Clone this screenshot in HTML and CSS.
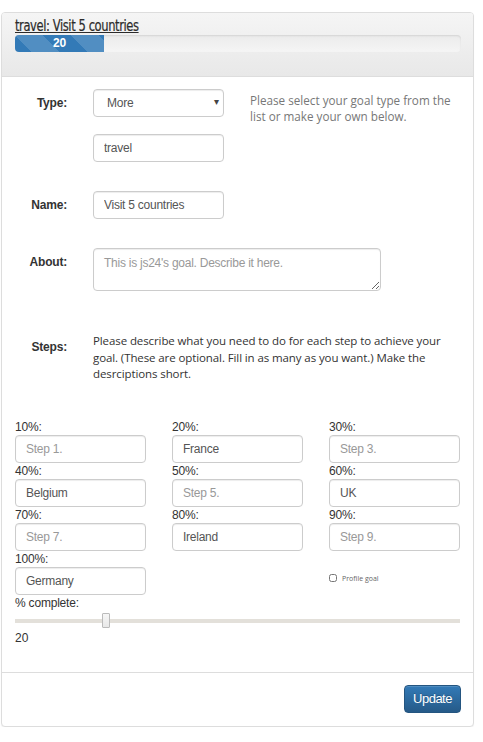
FILE: index.html
```html
<!DOCTYPE html>
<html>
<head>
<meta charset="utf-8">
<link rel="stylesheet" href="styles.css">
</head>
<body>
<div class="panel">
  <div class="panel-heading">
    <a class="title" href="#">travel: Visit 5 countries</a>
    <div class="progress">
      <div class="progress-bar" style="width:20%">20</div>
    </div>
  </div>
  <div class="panel-body">
    <div class="form-row">
      <div class="label">Type:</div>
      <div class="fields">
        <div class="select-wrap"><div class="select">More</div><span class="caret">&#9662;</span></div>
        <input class="control gap" type="text" value="travel">
      </div>
      <div class="help">Please select your goal type from the list or make your own below.</div>
    </div>
    <div class="form-row row-name">
      <div class="label">Name:</div>
      <div class="fields"><input class="control" type="text" value="Visit 5 countries"></div>
    </div>
    <div class="form-row row-about">
      <div class="label">About:</div>
      <div class="fields wide"><textarea class="control area" placeholder="This is js24's goal. Describe it here."></textarea></div>
    </div>
    <div class="steps-row">
      <div class="label steps-label">Steps:</div>
      <div class="steps-text">Please describe what you need to do for each step to achieve your goal. (These are optional. Fill in as many as you want.) Make the desrciptions short.</div>
    </div>
    <div class="steps-grid">
      <div class="cell"><div class="pct">10%:</div><input class="control" placeholder="Step 1."></div>
      <div class="cell"><div class="pct">20%:</div><input class="control" value="France"></div>
      <div class="cell"><div class="pct">30%:</div><input class="control" placeholder="Step 3."></div>
      <div class="cell"><div class="pct">40%:</div><input class="control" value="Belgium"></div>
      <div class="cell"><div class="pct">50%:</div><input class="control" placeholder="Step 5."></div>
      <div class="cell"><div class="pct">60%:</div><input class="control" value="UK"></div>
      <div class="cell"><div class="pct">70%:</div><input class="control" placeholder="Step 7."></div>
      <div class="cell"><div class="pct">80%:</div><input class="control" value="Ireland"></div>
      <div class="cell"><div class="pct">90%:</div><input class="control" placeholder="Step 9."></div>
      <div class="cell"><div class="pct">100%:</div><input class="control" value="Germany"></div>
      <div class="cell"></div>
      <div class="cell check-cell"><label class="check"><input type="checkbox" class="box"><span>Profile goal</span></label></div>
    </div>
    <div class="pct">% complete:</div>
    <div class="slider"><div class="track"></div><div class="thumb"></div></div>
    <div class="value">20</div>
  </div>
  <div class="panel-footer">
    <button class="btn">Update</button>
  </div>
</div>
</body>
</html>
```
FILE: styles.css
```css
html, body { margin: 0; padding: 0; background: #fff; }
body { font-family: "Liberation Sans", Arial, sans-serif; font-size: 12px; color: #333; }

.panel {
  margin: 12px 0 0 1px;
  width: 473px;
  box-sizing: border-box;
  border: 1px solid #ddd;
  border-radius: 4px;
  box-shadow: 0 1px 1px rgba(0,0,0,.05);
  background: #fff;
}
.panel-heading {
  height: 64px;
  box-sizing: border-box;
  padding: 4px 12px 0 13px;
  background: linear-gradient(to bottom, #f5f5f5 0%, #e8e8e8 100%);
  border-bottom: 1px solid #ddd;
  border-radius: 3px 3px 0 0;
}
.title-row { display: block; }
.title {
  display: inline-block;
  font-family: "DejaVu Sans", sans-serif;
  font-stretch: condensed;
  font-size: 16px;
  letter-spacing: -0.5px;
  line-height: 18px;
  color: #2b2b2b;
  text-decoration: underline;
  transform: scaleX(0.8);
  transform-origin: 0 50%;
  -webkit-text-stroke: 0.2px #2b2b2b;
}
.progress {
  height: 17px;
  background: linear-gradient(to bottom, #ebebeb 0%, #f5f5f5 100%);
  border-radius: 4px;
  box-shadow: inset 0 1px 2px rgba(0,0,0,.1);
  overflow: hidden;
}
.progress-bar {
  height: 100%;
  background-color: #337ab7;
  background-image: linear-gradient(45deg, rgba(255,255,255,.15) 25%, transparent 25%, transparent 50%, rgba(255,255,255,.15) 50%, rgba(255,255,255,.15) 75%, transparent 75%, transparent);
  background-size: 56px 56px;
  color: #fff;
  font-weight: bold;
  font-size: 12px;
  line-height: 17px;
  text-align: center;
}

.panel-body { padding: 12px 12px 26px 13px; }

.form-row {
  display: grid;
  grid-template-columns: 52px 131px 1fr;
  column-gap: 26px;
  align-items: start;
}
.label {
  font-weight: bold;
  text-align: right;
  padding-top: 7px;
  line-height: 14px;
  letter-spacing: -0.2px;
}
.fields { display: flex; flex-direction: column; }
.fields.wide { grid-column: 2 / 4; }
.row-name, .row-about { margin-top: 29px; }

.control {
  display: block;
  box-sizing: border-box;
  width: 131px;
  height: 28px;
  margin: 0;
  padding: 0 10px;
  border: 1px solid #ccc;
  border-radius: 4px;
  box-shadow: inset 0 1px 1px rgba(0,0,0,.075);
  font-family: "Liberation Sans", Arial, sans-serif;
  font-size: 12px;
  letter-spacing: -0.25px;
  color: #555;
  background: #fff;
  outline: none;
}
.control::placeholder { color: #999; }
.gap { margin-top: 17px; }
.select-wrap { position: relative; }
.select {
  box-sizing: border-box;
  height: 28px;
  border: 1px solid #ccc;
  border-radius: 4px;
  box-shadow: inset 0 1px 1px rgba(0,0,0,.075);
  padding-left: 13px;
  line-height: 26px;
  color: #555;
  font-size: 12px;
  letter-spacing: -0.25px;
}
.caret {
  position: absolute;
  right: 5px;
  top: 0;
  line-height: 26px;
  font-size: 10px;
  color: #444;
}
.help {
  font-family: "Open Sans", sans-serif;
  font-size: 11.7px;
  line-height: 16px;
  color: #777;
  padding-top: 3px;
}
.area {
  width: 288px;
  height: 43px;
  padding: 6px 10px;
  resize: vertical;
  line-height: 16px;
}

.steps-row {
  display: grid;
  grid-template-columns: 52px 1fr;
  column-gap: 26px;
  margin-top: 42px;
}
.steps-label { padding-top: 7px; }
.steps-text {
  font-family: "Open Sans", sans-serif;
  font-size: 11.5px;
  letter-spacing: -0.1px;
  line-height: 16.5px;
  color: #333;
}

.steps-grid {
  display: grid;
  grid-template-columns: 131px 131px 131px;
  column-gap: 26px;
  margin-top: 36px;
}
.pct { line-height: 16px; font-size: 12px; color: #333; letter-spacing: -0.2px; }
.check-cell { padding-top: 23px; }
.check { display: flex; align-items: center; gap: 5px; }
.box { width: 8px; height: 8px; margin: 0; }
.check span { font-family: "Open Sans", sans-serif; font-size: 7px; color: #666; }

.slider { position: relative; height: 16px; margin-top: 2px; width: 445px; }
.track { position: absolute; left: 0; right: 0; top: 6px; height: 4px; background: #e3e0da; }
.thumb {
  position: absolute;
  left: 87px;
  top: 0;
  width: 8px;
  height: 15px;
  box-sizing: border-box;
  background: linear-gradient(to bottom, #f6f6f6, #e8e8e8);
  border: 1px solid #bbb;
  border-radius: 1px;
}
.value { margin-top: 1px; line-height: 16px; }

.panel-footer {
  border-top: 1px solid #ddd;
  padding: 12px 12px 13px 13px;
  display: flex;
  justify-content: flex-end;
  border-radius: 0 0 3px 3px;
}
.btn {
  width: 57px;
  height: 28px;
  box-sizing: border-box;
  border: 1px solid #245580;
  border-radius: 4px;
  background: linear-gradient(to bottom, #337ab7 0%, #265a88 100%);
  color: #fff;
  font-family: "Liberation Sans", Arial, sans-serif;
  font-size: 13px;
  letter-spacing: -0.5px;
  padding: 0;
  text-shadow: 0 -1px 0 rgba(0,0,0,.2);
  box-shadow: inset 0 1px 0 rgba(255,255,255,.15);
}
```
